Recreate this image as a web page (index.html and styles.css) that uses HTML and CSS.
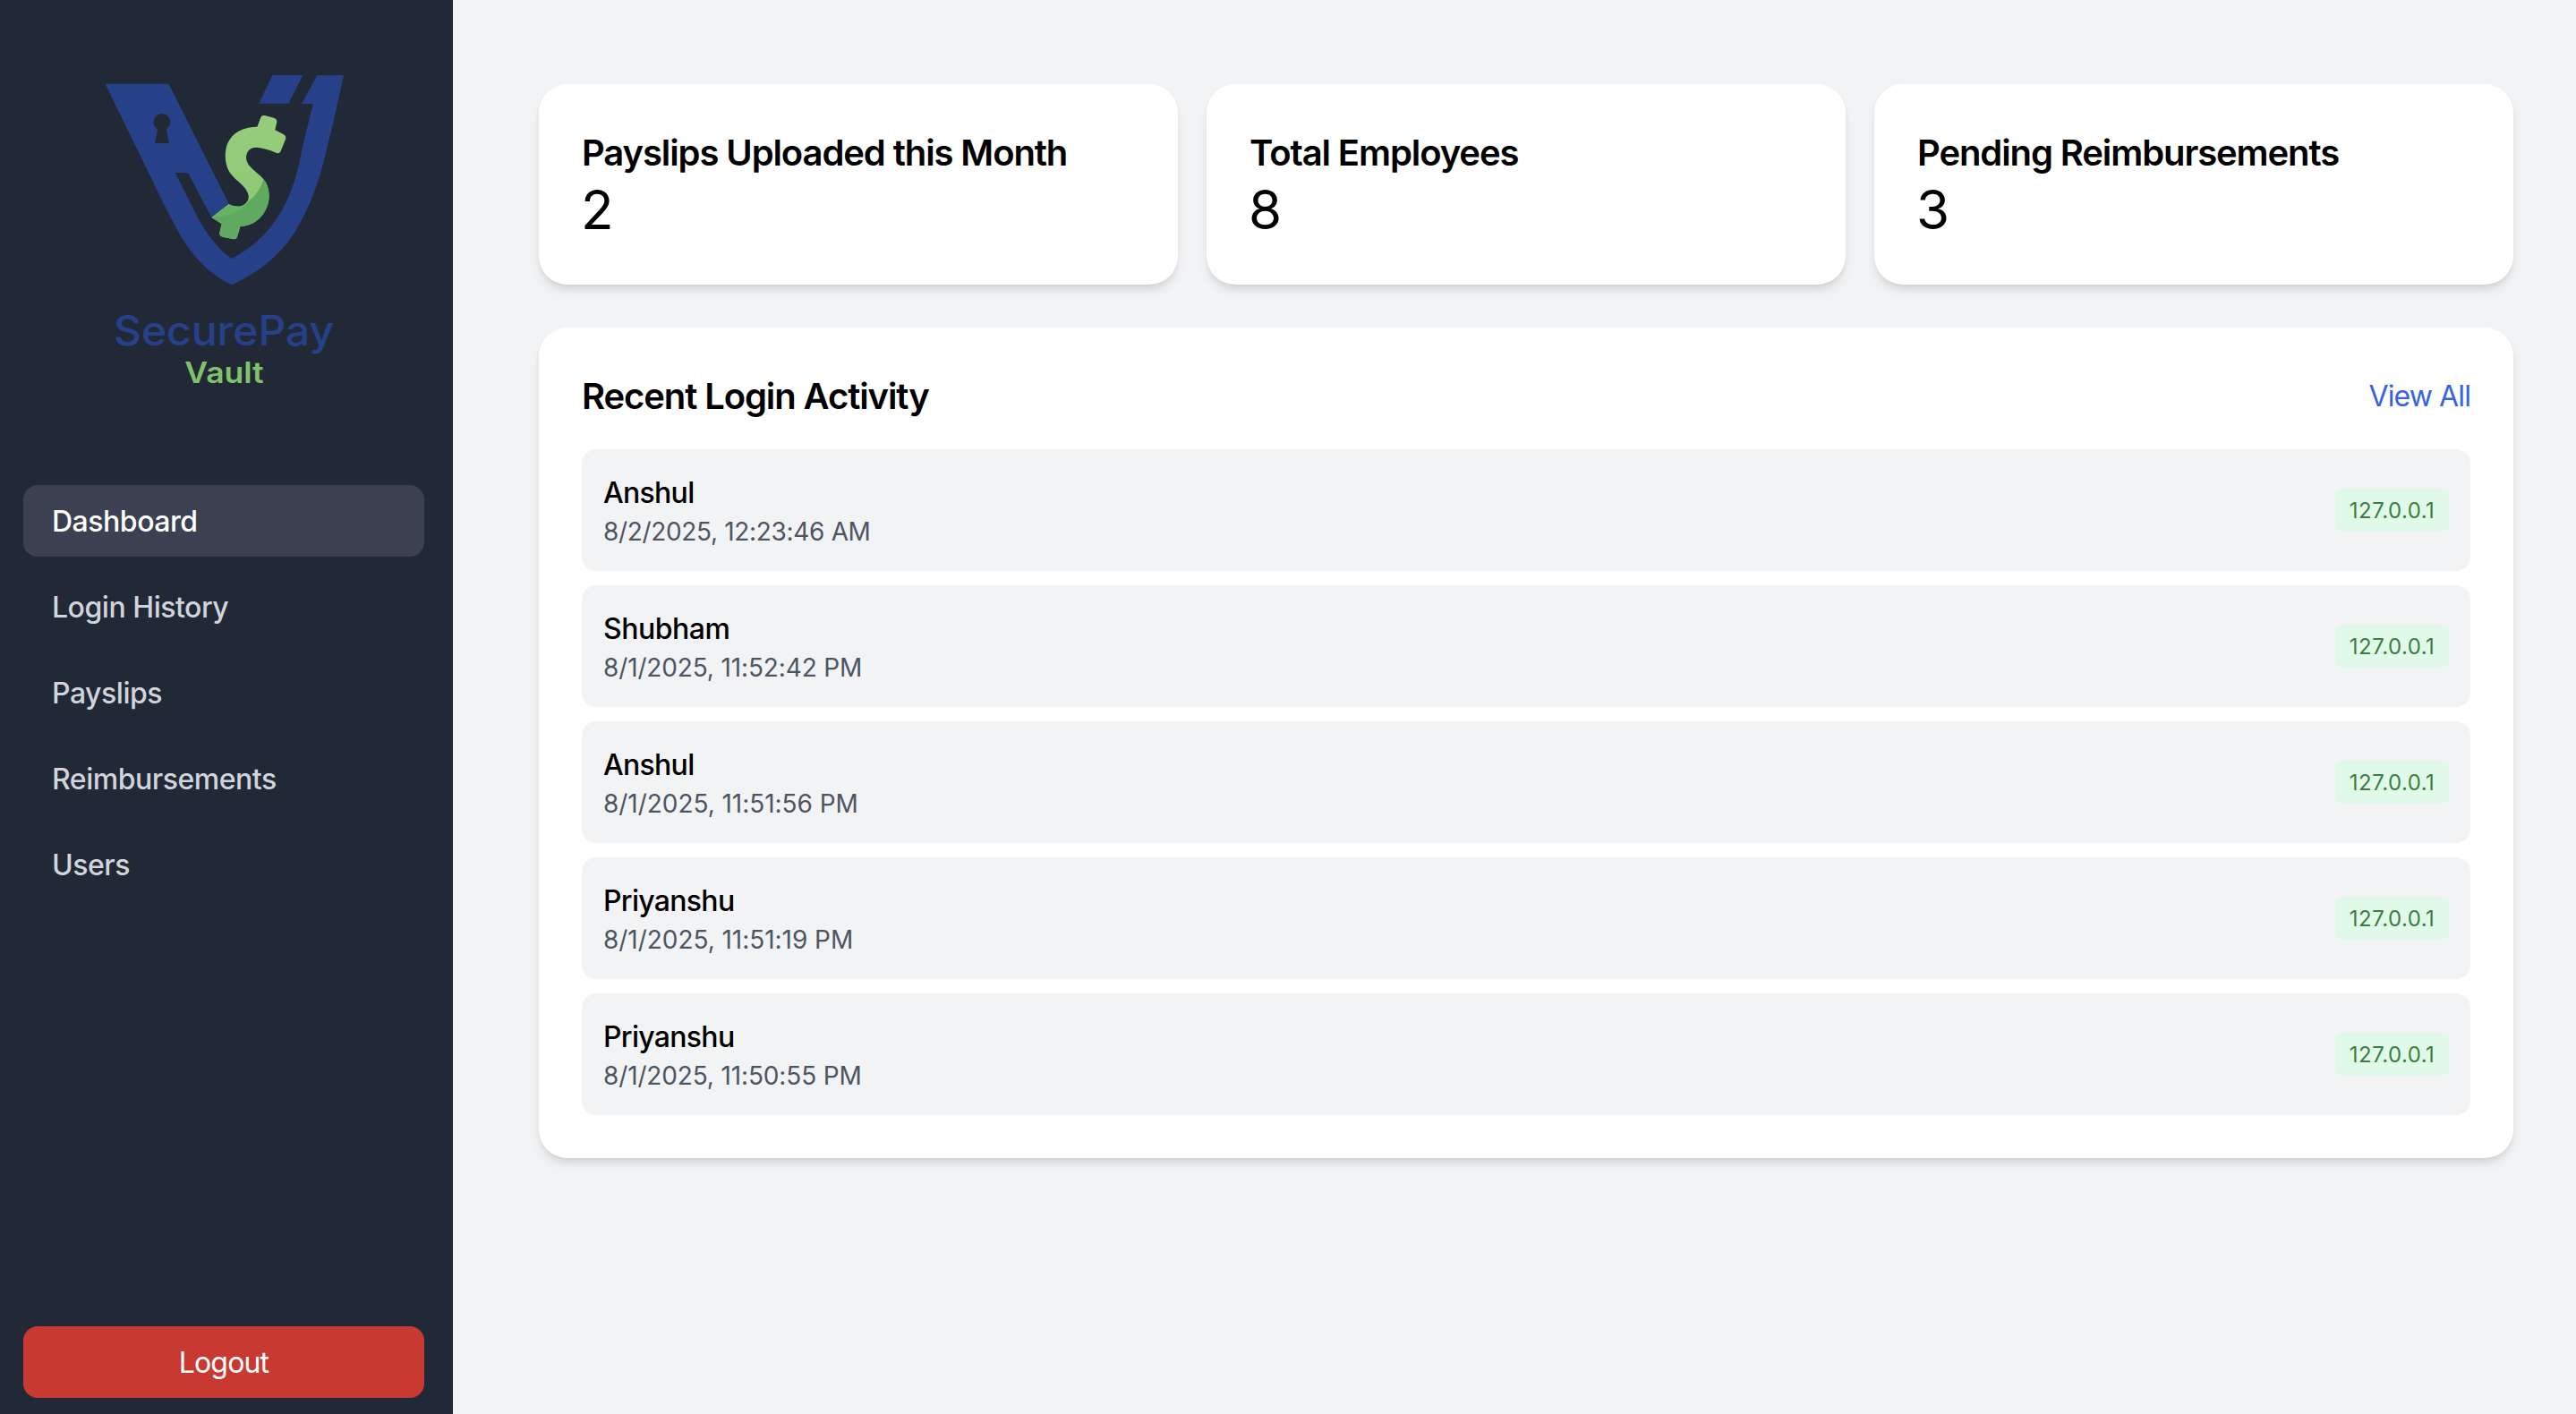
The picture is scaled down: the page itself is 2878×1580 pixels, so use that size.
FILE: index.html
```
<!DOCTYPE html>
<html lang="en">
<head>
<meta charset="utf-8">
<title>SecurePay Vault</title>
<link rel="stylesheet" href="styles.css">
</head>
<body>
<div class="app">
  <aside class="sidebar">
    <svg class="logo" viewBox="0 0 900 1170" role="img" aria-label="SecurePay Vault">
      <defs>
        <clipPath id="dollar-shape">
          <path id="dollar" d="M574 214Q577 205 587 207L618 215Q629 219 628 229L622 256L650 270Q660 275 658 285L641 326Q637 336 627 333Q590 316 560 314C533 314 525 333 525 350C529 385 572 399 590 430C605 457 604 487 596 511C579 555 545 577 505 580L495 614Q492 623 482 622L446 614Q435 611 436 601L443 570L409 549L467 504Q480 512 502 512C523 510 535 492 533 476C529 443 483 423 467 393C452 367 453 327 461 305C478 263 514 246 562 245Z"/>
        </clipPath>
        <linearGradient id="leaf" x1="0" y1="0" x2="0" y2="1">
          <stop offset="0" stop-color="#97cc7c"/>
          <stop offset="1" stop-color="#8cc873"/>
        </linearGradient>
      </defs>
      <g class="logo-blue">
        <path fill-rule="evenodd" d="M53 101H265L467 503L409 549L330 399H287L353 531C390 603 430 655 476 687C525 661 572 626 610 577C671 500 699 400 710 330L749 168H711L763 73H852L817 230L790 340C770 430 735 520 696 584C646 672 565 735 477 775C425 753 376 708 338 660C300 607 278 560 242 490ZM228 253L219 300H267L257 253A28 28 0 1 0 228 253Z"/>
        <path d="M613 72H715L667 167H568Z"/>
      </g>
      <g clip-path="url(#dollar-shape)">
        <rect x="400" y="200" width="270" height="430" fill="url(#leaf)"/>
        <path fill="#5faa60" d="M584 420Q570 467 533 494L505 520L400 549V640H670V400Z"/>
        <path fill="#67b366" d="M400 549L467 504L540 490Q500 545 409 549Z"/>
      </g>
      <text class="logo-name" x="81" y="979" textLength="738" lengthAdjust="spacingAndGlyphs">SecurePay</text>
      <text class="logo-sub" x="319" y="1105" textLength="265" lengthAdjust="spacingAndGlyphs">Vault</text>
    </svg>
    <nav class="nav">
      <a class="nav-item active">Dashboard</a>
      <a class="nav-item">Login History</a>
      <a class="nav-item">Payslips</a>
      <a class="nav-item">Reimbursements</a>
      <a class="nav-item">Users</a>
    </nav>
    <button class="logout">Logout</button>
  </aside>
  <main class="main">
    <section class="stats">
      <div class="card"><h2>Payslips Uploaded this Month</h2><p class="stat">2</p></div>
      <div class="card"><h2>Total Employees</h2><p class="stat">8</p></div>
      <div class="card"><h2>Pending Reimbursements</h2><p class="stat">3</p></div>
    </section>
    <section class="card">
      <header class="panel-head"><h2>Recent Login Activity</h2><a class="view-all">View All</a></header>
      <ul class="logins">
        <li><div><p class="name">Anshul</p><p class="time tight">8/2/2025, 12:23:46 AM</p></div><span class="ip">127.0.0.1</span></li>
        <li><div><p class="name wide">Shubham</p><p class="time">8/1/2025, 11:52:42 PM</p></div><span class="ip">127.0.0.1</span></li>
        <li><div><p class="name">Anshul</p><p class="time loose">8/1/2025, 11:51:56 PM</p></div><span class="ip">127.0.0.1</span></li>
        <li><div><p class="name">Priyanshu</p><p class="time loose">8/1/2025, 11:51:19 PM</p></div><span class="ip">127.0.0.1</span></li>
        <li><div><p class="name">Priyanshu</p><p class="time">8/1/2025, 11:50:55 PM</p></div><span class="ip">127.0.0.1</span></li>
      </ul>
    </section>
  </main>
</div>
</body>
</html>
```
FILE: styles.css
```
* { box-sizing: border-box; margin: 0; padding: 0; }

body {
  font-family: Inter, "Liberation Sans", sans-serif;
  font-size: 32px;
  line-height: 47px;
  color: #000;
  background: #f2f3f5;
}

.app { display: flex; height: 1580px; }

.sidebar {
  flex: none;
  width: 506px;
  padding: 60px 32px 18px 26px;
  display: flex;
  flex-direction: column;
  background: #222936;
}

.logo { display: block; flex: none; width: 300px; height: 390px; align-self: center; }
.logo-blue { fill: #26418a; }
.logo-name { font-size: 138px; font-weight: 500; fill: #26418a; }
.logo-sub { font-size: 98px; font-weight: 600; fill: #82c16c; }

.nav { margin-top: 92px; display: flex; flex-direction: column; gap: 16px; }
.nav-item {
  padding: 17px 32px 16px;
  border-radius: 16px;
  font-weight: 500;
  letter-spacing: -0.47px;
  color: #d1d5db;
}
.nav-item.active { background: #3b4150; color: #fff; }

.logout {
  margin-top: auto;
  height: 80px;
  padding-top: 1px;
  border: 0;
  border-radius: 16px;
  font: inherit;
  letter-spacing: -0.84px;
  color: #fff;
  background: #c83a31;
}

.main { flex: 1; padding: 94px 70px 0 96px; display: flex; flex-direction: column; gap: 48px; }
.stats { display: grid; grid-template-columns: repeat(3, 1fr); gap: 32px; }

.card {
  padding: 48px;
  border-radius: 32px;
  background: #fff;
  box-shadow: 0 8px 12px -2px rgba(0, 0, 0, .1), 0 4px 8px -4px rgba(0, 0, 0, .1);
}
.card h2 { padding-top: 1px; font-size: 40px; line-height: 55px; font-weight: 600; letter-spacing: -1.1px; }
.stat { font-size: 60px; line-height: 72px; margin-left: -1px; }

.panel-head { display: flex; justify-content: space-between; align-items: center; margin-bottom: 32px; }
.view-all { padding-top: 1px; color: #3662e3; letter-spacing: -0.9px; }

.logins { list-style: none; display: flex; flex-direction: column; gap: 16px; }
.logins li {
  display: flex;
  justify-content: space-between;
  align-items: center;
  padding: 24px;
  border-radius: 16px;
  background: #f2f3f5;
}
.name { padding-top: 1px; font-weight: 500; letter-spacing: -0.7px; }
.name.wide { letter-spacing: -0.5px; }
.time { font-size: 28px; line-height: 40px; letter-spacing: -0.14px; color: #4d5563; }
.time.tight { letter-spacing: -0.33px; }
.time.loose { letter-spacing: -0.04px; }
.ip {
  width: 127px;
  padding: 9px 0 8px;
  border-radius: 8px;
  font-size: 24px;
  line-height: 31px;
  letter-spacing: 0.45px;
  text-align: center;
  color: #3b7e44;
  background: #e1f9e8;
}
```
